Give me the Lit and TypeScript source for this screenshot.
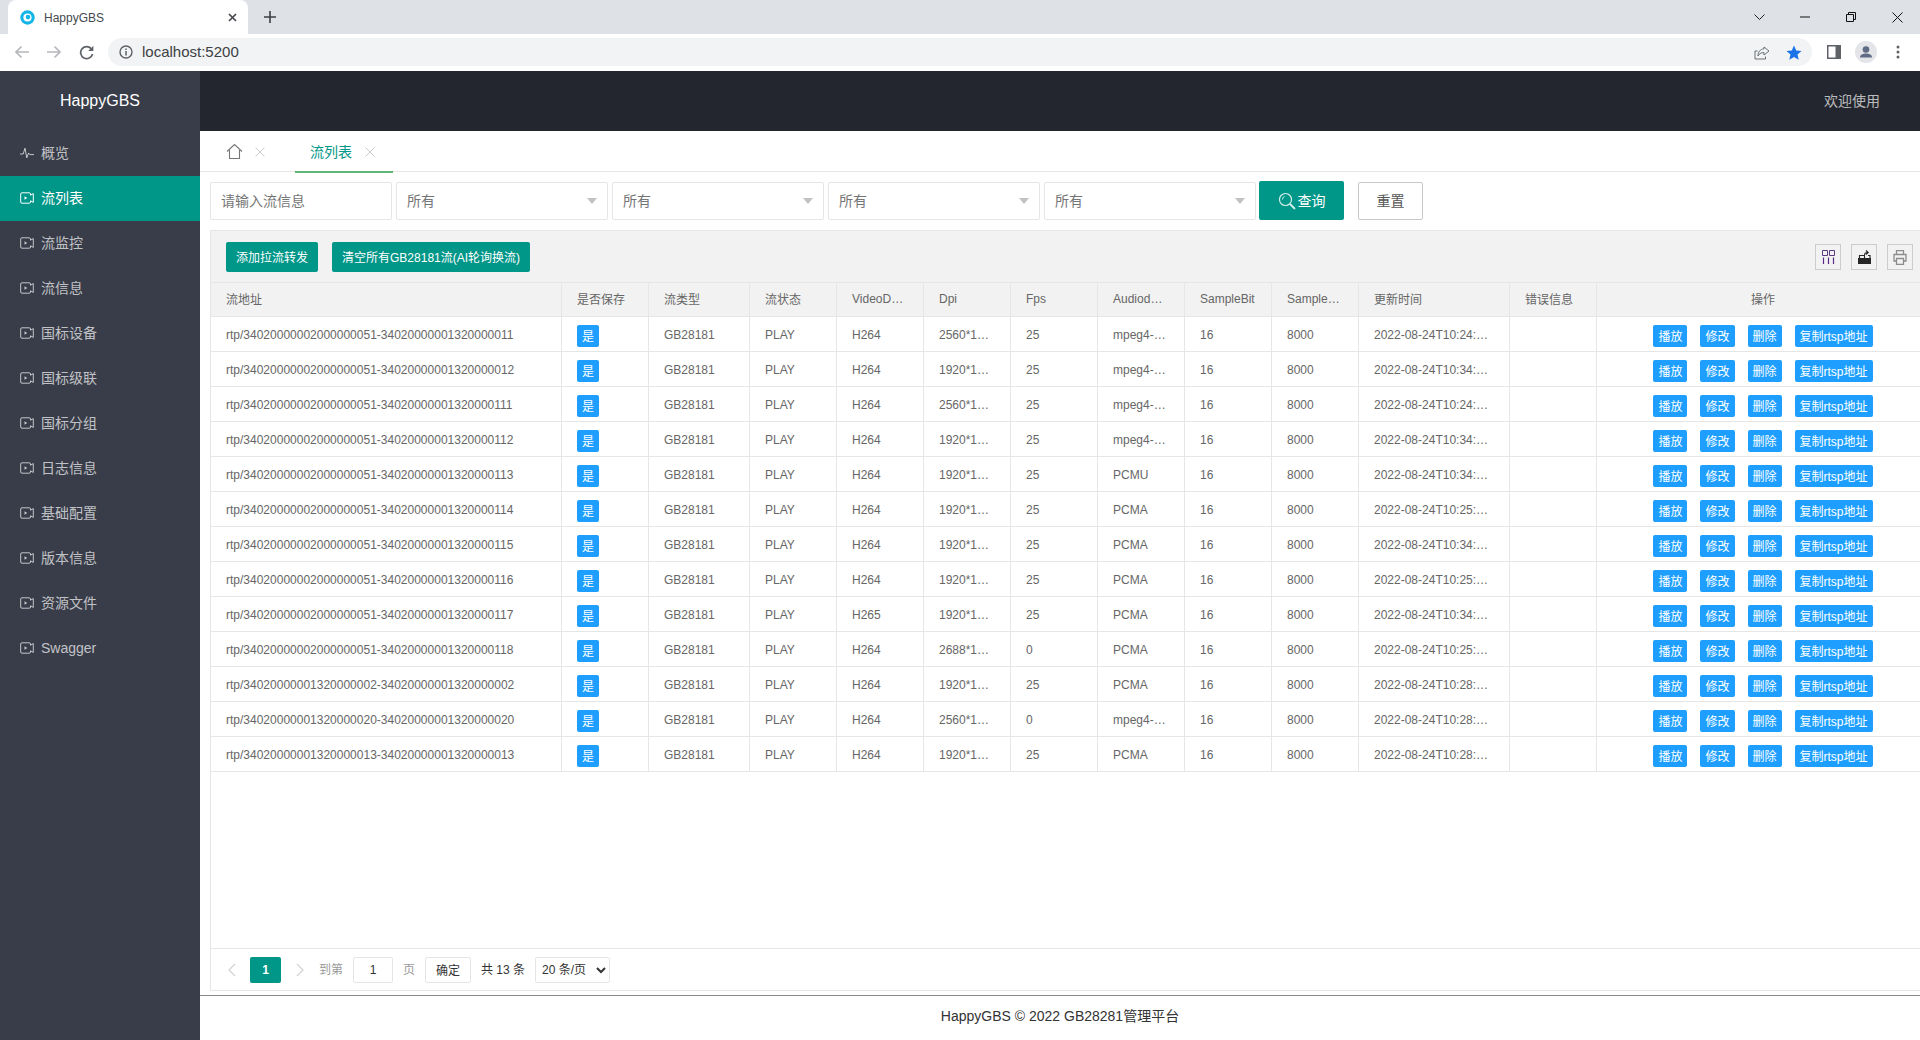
import { LitElement, html, css, svg } from "lit";
import { customElement } from "lit/decorators.js";

const A = "rtp/34020000002000000051-340200000013200";
const rows = [
  [A + "00011", "H264", "2560*1440", "25", "mpeg4-generic", "10:24:33.218+08:00"],
  [A + "00012", "H264", "1920*1080", "25", "mpeg4-generic", "10:34:32.402+08:00"],
  [A + "00111", "H264", "2560*1440", "25", "mpeg4-generic", "10:24:35.207+08:00"],
  [A + "00112", "H264", "1920*1080", "25", "mpeg4-generic", "10:34:35.640+08:00"],
  [A + "00113", "H264", "1920*1080", "25", "PCMU", "10:34:36.093+08:00"],
  [A + "00114", "H264", "1920*1080", "25", "PCMA", "10:25:02.571+08:00"],
  [A + "00115", "H264", "1920*1080", "25", "PCMA", "10:34:38.326+08:00"],
  [A + "00116", "H264", "1920*1080", "25", "PCMA", "10:25:03.884+08:00"],
  [A + "00117", "H265", "1920*1080", "25", "PCMA", "10:34:39.245+08:00"],
  [A + "00118", "H264", "2688*1520", "0", "PCMA", "10:25:04.759+08:00"],
  ["rtp/34020000001320000002-34020000001320000002", "H264", "1920*1080", "25", "PCMA", "10:28:20.230+08:00"],
  ["rtp/34020000001320000020-34020000001320000020", "H264", "2560*1440", "0", "mpeg4-generic", "10:28:22.362+08:00"],
  ["rtp/34020000001320000013-34020000001320000013", "H264", "1920*1080", "25", "PCMA", "10:28:32.907+08:00"],
];
const widths = [351, 87, 101, 87, 87, 87, 87, 87, 87, 87, 151, 87, 333];
const heads = ["流地址", "是否保存", "流类型", "流状态", "VideoDecode", "Dpi", "Fps", "Audiodecode", "SampleBit", "SampleRate", "更新时间", "错误信息", "操作"];
const menu = ["概览", "流列表", "流监控", "流信息", "国标设备", "国标级联", "国标分组", "日志信息", "基础配置", "版本信息", "资源文件", "Swagger"];

const i = (w: number, h: number, body: unknown, vb = `0 0 ${w} ${h}`) =>
  html`<svg width=${w} height=${h} viewBox=${vb} fill="none" aria-hidden="true">${body}</svg>`;

const videoIcon = i(14, 12, svg`<path d="M10.500 3.200V2a1.200 1.200 0 0 0-1.200-1.200H1.900A1.200 1.200 0 0 0 .7 2v8a1.200 1.200 0 0 0 1.200 1.200h7.400A1.200 1.200 0 0 0 10.500 10V8.800l2.800 1.600V1.600z" stroke="currentColor" stroke-width="1"/><path d="M4.500 4.200 7.300 6 4.500 7.800z" fill="currentColor"/>`);
const pulseIcon = i(14, 12, svg`<path d="M0 7h3.200L5 1.200l1.800 9.600L8.600 6l1.200 1.600H14" stroke="currentColor" stroke-width="1"/>`);

@customElement("app-root")
export class AppRoot extends LitElement {
  static styles = css`
    :host { display: block; width: 1920px; height: 1040px; overflow: hidden; font-family: "Liberation Sans", "Noto Sans CJK SC", sans-serif; font-size: 12px; color: #666; background: #fff; }
    * { box-sizing: border-box; }
    svg { display: block; flex: none; }

    .tabstrip { height: 34px; background: #dee1e6; display: flex; align-items: stretch; }
    .ctab { width: 240px; margin-left: 8px; background: #fff; border-radius: 8px 8px 0 0; display: flex; align-items: center; padding: 0 11px 0 12px; color: #45494e; font-size: 12px; }
    .ctab span { margin-left: 9px; flex: 1; padding-top: 1px; }
    .plus { margin-left: 16px; align-self: center; }
    .winctl { margin-left: auto; display: flex; align-items: center; }
    .winctl div { width: 46px; display: flex; justify-content: center; }
    .toolbar { height: 37px; background: #fff; display: flex; align-items: center; padding: 0 0 1px 6px; }
    .nav { width: 32px; display: flex; justify-content: center; }
    .pill { margin-left: 6px; width: 1704px; height: 28px; border-radius: 14px; background: #f1f3f4; display: flex; align-items: center; padding-left: 11px; font-size: 15px; color: #3c4043; }
    .pill .url { margin-left: 9px; padding-bottom: 1px; }
    .pill .right { margin-left: auto; display: flex; align-items: center; gap: 16px; padding-right: 10px; }
    .tools { display: flex; align-items: center; margin-left: 6px; }
    .tools > div { width: 32px; display: flex; justify-content: center; }

    .app { display: flex; height: 969px; }
    .side { width: 200px; flex: none; background: #393d49; }
    .logo { height: 60px; display: flex; align-items: center; justify-content: center; color: #fff; font-size: 16px; }
    .item { height: 45px; display: flex; align-items: center; padding-left: 20px; gap: 7px; font-size: 14px; color: rgba(255,255,255,.7); }
    .item span { padding-bottom: 4px; }
    .item.latin span { padding-bottom: 2px; }
    .item svg { margin-bottom: 2px; }
    .item.on { background: #009688; color: #fff; }

    .main { flex: 1; min-width: 0; display: flex; flex-direction: column; overflow: hidden; }
    .head { height: 60px; flex: none; background: #23262e; display: flex; align-items: center; justify-content: flex-end; padding: 0 40px 2px 0; color: rgba(255,255,255,.7); font-size: 14px; }
    .tabs { height: 41px; flex: none; border-bottom: 1px solid #e6e6e6; display: flex; }
    .tab { position: relative; height: 41px; display: flex; align-items: center; font-size: 14px; color: #666; }
    .tab span { padding-bottom: 2px; }
    .tab.home { width: 95px; padding-left: 26px; gap: 11px; }
    .tab.home svg:last-child { margin-left: 1px; }
    .tab.cur { width: 98px; padding-left: 15px; gap: 13px; color: #009688; }
    .tab.cur::after { content: ""; position: absolute; left: 0; right: 0; bottom: -1px; height: 2px; background: #5fb878; }

    .filters { flex: none; display: flex; padding: 10px 0 0 10px; height: 48px; }
    .field { height: 38px; border: 1px solid #e6e6e6; border-radius: 2px; display: flex; align-items: center; padding: 0 0 2px 10px; font-size: 14px; color: #757575; margin-right: 4px; background: #fff; }
    .field.input { width: 182px; }
    .field.sel { width: 212px; justify-content: space-between; padding-right: 10px; }
    .caret { width: 0; height: 0; border-style: solid; border-color: #c2c2c2 transparent transparent; border-width: 6px 5.500px 0; margin-top: 2px; }
    .qbtn { width: 85px; height: 39px; margin: -1px 0 0 -1px; background: #009688; color: #fff; border-radius: 2px; display: flex; align-items: center; justify-content: center; font-size: 14px; gap: 2px; }
    .qbtn span { padding-bottom: 2px; }
    .rbtn { width: 65px; height: 38px; margin-left: 14px; border: 1px solid #c9c9c9; border-radius: 2px; display: flex; align-items: center; justify-content: center; font-size: 14px; color: #555; padding-bottom: 2px; }

    .box { flex: 1; min-height: 0; margin: 10px -1px 0 10px; border: 1px solid #e6e6e6; display: flex; flex-direction: column; overflow: hidden; }
    .tbar { height: 51px; flex: none; background: #f2f2f2; display: flex; align-items: flex-start; padding: 11px 7px 0 15px; }
    .btn { height: 30px; padding: 0 10px 2px; background: #009688; color: #fff; border-radius: 2px; display: flex; align-items: center; margin-right: 14px; }
    .ticons { margin-left: auto; display: flex; gap: 10px; margin-top: 2px; }
    .ticons div { width: 26px; height: 26px; border: 1px solid #ccc; display: flex; align-items: center; justify-content: center; }

    .tablewrap { flex: 1; min-height: 0; overflow: hidden; }
    table { border-collapse: separate; border-spacing: 0; table-layout: fixed; width: 1718px; }
    th, td { height: 35px; padding: 2px 15px 0; border-right: 1px solid #e6e6e6; border-bottom: 1px solid #e6e6e6; overflow: hidden; white-space: nowrap; text-overflow: ellipsis; font-weight: 400; text-align: left; color: #666; font-size: 12px; }
    th { background: #f2f2f2; border-top: 1px solid #e6e6e6; padding: 0 15px 2px; }
    th.c, td.c { text-align: center; }
    td.ctl { padding-top: 3px; }
    .tag { display: inline-flex; width: 22px; height: 22px; padding-bottom: 1px; align-items: center; justify-content: center; background: #1e9fff; color: #fff; border-radius: 2px; vertical-align: middle; }
    .acts { display: inline-flex; gap: 13px; vertical-align: middle; }
    .act { height: 22px; padding: 0 5px 1px; display: flex; align-items: center; background: #1e9fff; color: #fff; border-radius: 2px; }

    .pager { height: 42px; flex: none; border-top: 1px solid #e6e6e6; display: flex; align-items: center; padding-left: 17px; color: #999; }
    .pager span { padding-bottom: 2px; }
    .cur-page { width: 31px; height: 26px; background: #009688; color: #fff; font-weight: 700; border-radius: 2px; display: flex; align-items: center; justify-content: center; margin: 0 15px 0 14px; }
    .pinput { width: 40px; height: 26px; border: 1px solid #e6e6e6; border-radius: 2px; color: #333; display: flex; align-items: center; justify-content: center; margin: 0 10px; }
    .pok { width: 46px; height: 26px; border: 1px solid #e6e6e6; border-radius: 2px; color: #333; display: flex; align-items: center; justify-content: center; margin: 0 10px; }
    .ptotal { color: #333; margin-right: 10px; }
    select { width: 75px; height: 26px; border: 1px solid #e6e6e6; border-radius: 2px; background: #fff; color: #333; font: 12px "Liberation Sans", "Noto Sans CJK SC", sans-serif; padding-left: 2px; outline: none; }
    .hl16 { margin-left: 15px; }

    .foot { height: 45px; flex: none; margin-top: 4px; border-top: 1px solid #8a8a8a; display: flex; align-items: center; justify-content: center; font-size: 14px; color: #333; padding-bottom: 6px; }
  `;

  private chrome() {
    return html`
      <div class="tabstrip">
        <div class="ctab">
          ${i(15, 15, svg`<circle cx="7.500" cy="7.500" r="7.200" fill="#12b5e6"/><circle cx="7.500" cy="7.500" r="4.100" fill="#fff"/><circle cx="8" cy="7.100" r="2.300" fill="#12b5e6"/>`)}
          <span>HappyGBS</span>
          ${i(9, 9, svg`<path d="M1 1l7 7M8 1l-7 7" stroke="#45494e" stroke-width="1.700"/>`)}
        </div>
        <div class="plus">${i(12, 12, svg`<path d="M6 0v12M0 6h12" stroke="#3c4043" stroke-width="1.600"/>`)}</div>
        <div class="winctl">
          <div>${i(11, 6, svg`<path d="M.5.5l5 5 5-5" stroke="#222" stroke-width="1"/>`)}</div>
          <div>${i(10, 2, svg`<path d="M0 1h10" stroke="#111" stroke-width="1"/>`)}</div>
          <div>${i(10, 10, svg`<path d="M.5 2.500h7v7h-7zM2.500 2.500v-2h7v7h-2" stroke="#111" stroke-width="1"/>`)}</div>
          <div>${i(11, 11, svg`<path d="M.5.5l10 10M10.500.5l-10 10" stroke="#111" stroke-width="1"/>`)}</div>
        </div>
      </div>
      <div class="toolbar">
        <div class="nav">${i(16, 14, svg`<path d="M15 7H2M7.500 1.500 2 7l5.500 5.500" stroke="#b5b7ba" stroke-width="1.700"/>`)}</div>
        <div class="nav">${i(16, 14, svg`<path d="M1 7h13M8.500 1.500 14 7l-5.500 5.500" stroke="#b5b7ba" stroke-width="1.700"/>`)}</div>
        <div class="nav">${i(15, 15, svg`<path d="M12.600 4.200A6 6 0 1 0 13.500 9" stroke="#5f6368" stroke-width="1.700"/><path d="M14.400 .8v5.200H9.200z" fill="#5f6368"/>`)}</div>
        <div class="pill">
          ${i(14, 14, svg`<circle cx="7" cy="7" r="6" stroke="#5f6368" stroke-width="1.400"/><path d="M7 6v4.400M7 3.400v1.500" stroke="#5f6368" stroke-width="1.500"/>`)}
          <span class="url">localhost:5200</span>
          <div class="right">
            ${i(16, 15, svg`<path d="M10 2l5 4-5 4V7.600C6.500 7.600 5 9 4 11c0-4 2-6.800 6-7.200z" stroke="#5f6368" stroke-width=".9"/><path d="M1 6v8h10.500v-2.500M1 6h2.500" stroke="#5f6368" stroke-width=".9"/>`)}
            ${i(16, 15, svg`<path d="M8 .5l2.200 4.900 5.300.6-4 3.500 1.200 5.200L8 12l-4.700 2.700 1.200-5.200-4-3.500 5.300-.6z" fill="#1a73e8"/>`)}
          </div>
        </div>
        <div class="tools">
          <div>${i(14, 14, svg`<rect x=".75" y=".75" width="12.500" height="12.500" stroke="#5f6368" stroke-width="1.500"/><rect x="8.500" y=".75" width="4.750" height="12.500" fill="#5f6368"/>`)}</div>
          <div>${i(22, 22, svg`<circle cx="11" cy="11" r="11" fill="#e3e5e9"/><circle cx="11" cy="8.500" r="3.300" fill="#5f6b84"/><path d="M5 16.500c0-3 3-4 6-4s6 1 6 4z" fill="#5f6b84"/>`)}</div>
          <div>${i(4, 14, svg`<circle cx="2" cy="2" r="1.500" fill="#5f6368"/><circle cx="2" cy="7" r="1.500" fill="#5f6368"/><circle cx="2" cy="12" r="1.500" fill="#5f6368"/>`)}</div>
        </div>
      </div>`;
  }

  render() {
    const closeX = i(10, 10, svg`<path d="M.5.5l9 9M9.500.5l-9 9" stroke="#ccc" stroke-width="1"/>`);
    return html`
      ${this.chrome()}
      <div class="app">
        <aside class="side">
          <div class="logo">HappyGBS</div>
          ${menu.map((m, n) => html`<div class="item ${n === 1 ? "on" : ""} ${n === 11 ? "latin" : ""}">${n === 0 ? pulseIcon : videoIcon}<span>${m}</span></div>`)}
        </aside>
        <div class="main">
          <div class="head">欢迎使用</div>
          <div class="tabs">
            <div class="tab home">
              ${i(17, 17, svg`<path d="M1 8.500 8.500 1.500 16 8.500M3.500 7v8.500h10V7" stroke="#777" stroke-width="1.100"/>`)}
              ${closeX}
            </div>
            <div class="tab cur"><span>流列表</span>${closeX}</div>
          </div>
          <div class="filters">
            <div class="field input">请输入流信息</div>
            ${[0, 1, 2, 3].map(() => html`<div class="field sel"><span>所有</span><i class="caret"></i></div>`)}
            <div class="qbtn">
              ${i(18, 18, svg`<circle cx="7.500" cy="7.500" r="6" stroke="#d6efec" stroke-width="1.200"/><path d="M4.500 7.500a3 3 0 0 1 2-3" stroke="#d6efec"/><path d="M12 12l5 5" stroke="#d6efec" stroke-width="1.800"/>`)}
              <span>查询</span>
            </div>
            <div class="rbtn">重置</div>
          </div>
          <div class="box">
            <div class="tbar">
              <div class="btn">添加拉流转发</div>
              <div class="btn">清空所有GB28181流(AI轮询换流)</div>
              <div class="ticons">
                <div>${i(13, 14, svg`<path d="M.5.5h5v5h-5zM7.500.5h5v5h-5z" stroke="#5b3a7e"/><path d="M1.500 7.500V14M6.500 7.500V14M11.500 7.500V14" stroke="#5b2a86" stroke-width="1.200"/>`)}</div>
                <div>${i(13, 14, svg`<path d="M0 8h13v6H0z" fill="#262626"/><path d="M1.500 8V5.500h5M10 5.500h2V8" stroke="#262626" stroke-width="1.100"/><path d="M6.500 8V5c0-1.800 1-2.500 3-2.500M8 .5l2.200 2L8 4.500" stroke="#262626" stroke-width="1.100"/>`)}</div>
                <div>${i(14, 15, svg`<path d="M3.500 4.500V.7h7v3.800M3.500 11H1V4.500h12V11h-2.500M3.500 8.500h7v5.800h-7z" stroke="#8c8c8c" stroke-width="1.300"/>`)}</div>
              </div>
            </div>
            <div class="tablewrap">
              <table>
                <colgroup>${widths.map((w) => html`<col style="width:${w}px" />`)}</colgroup>
                <thead><tr>${heads.map((h, n) => html`<th class=${n === 12 ? "c" : ""}>${h}</th>`)}</tr></thead>
                <tbody>
                  ${rows.map((r) => html`<tr>
                    <td>${r[0]}</td>
                    <td class="ctl"><span class="tag">是</span></td>
                    <td>GB28181</td>
                    <td>PLAY</td>
                    <td>${r[1]}</td>
                    <td>${r[2]}</td>
                    <td>${r[3]}</td>
                    <td>${r[4]}</td>
                    <td>16</td>
                    <td>8000</td>
                    <td>2022-08-24T${r[5]}</td>
                    <td></td>
                    <td class="c ctl"><span class="acts"><span class="act">播放</span><span class="act">修改</span><span class="act">删除</span><span class="act">复制rtsp地址</span></span></td>
                  </tr>`)}
                </tbody>
              </table>
            </div>
            <div class="pager">
              ${i(8, 14, svg`<path d="M7 1 1 7l6 6" stroke="#d2d2d2" stroke-width="1.200"/>`)}
              <div class="cur-page">1</div>
              ${i(8, 14, svg`<path d="M1 1l6 6-6 6" stroke="#d2d2d2" stroke-width="1.200"/>`)}
              <span class="hl16">到第</span>
              <div class="pinput">1</div>
              <span>页</span>
              <div class="pok">确定</div>
              <span class="ptotal">共 13 条</span>
              <select><option>20 条/页</option></select>
            </div>
          </div>
          <div class="foot">HappyGBS © 2022 GB28281管理平台</div>
        </div>
      </div>
    `;
  }
}
